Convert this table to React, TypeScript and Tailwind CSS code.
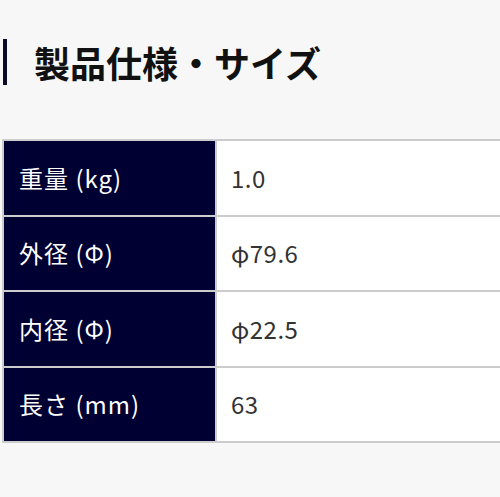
import React from "react";

const rows = [
  { label: "重量 (kg)", value: "1.0" },
  { label: "外径 (Φ)", value: "φ79.6" },
  { label: "内径 (Φ)", value: "φ22.5" },
  { label: "長さ (mm)", value: "63" },
];

export default function App() {
  return (
    <div
      className="w-[500px] h-[497px] bg-[#f7f7f7] overflow-hidden"
      style={{ fontFamily: '"Noto Sans CJK JP", "Noto Sans", sans-serif' }}
    >
      <div className="pt-[38px] pl-[3px] flex items-center h-[86px]">
        <div className="w-[4px] h-[46px] bg-[#0a0a2a]" />
        <h2 className="ml-[27px] text-[36px] font-bold text-[#111111] leading-none">
          製品仕様・サイズ
        </h2>
      </div>
      <table className="mt-[53px] ml-[2px] w-[520px] border-collapse">
        <tbody>
          {rows.map((r) => (
            <tr key={r.label} className="h-[75.5px]">
              <th className="w-[213px] bg-[#000033] border-2 border-[#cccccc] text-left font-normal text-white text-[24px] tracking-[1px] pl-[15px]">
                {r.label}
              </th>
              <td className="bg-white border-2 border-[#cccccc] text-left text-[24px] tracking-[0.5px] text-[#333333] pl-[14px]">
                {r.value}
              </td>
            </tr>
          ))}
        </tbody>
      </table>
    </div>
  );
}
